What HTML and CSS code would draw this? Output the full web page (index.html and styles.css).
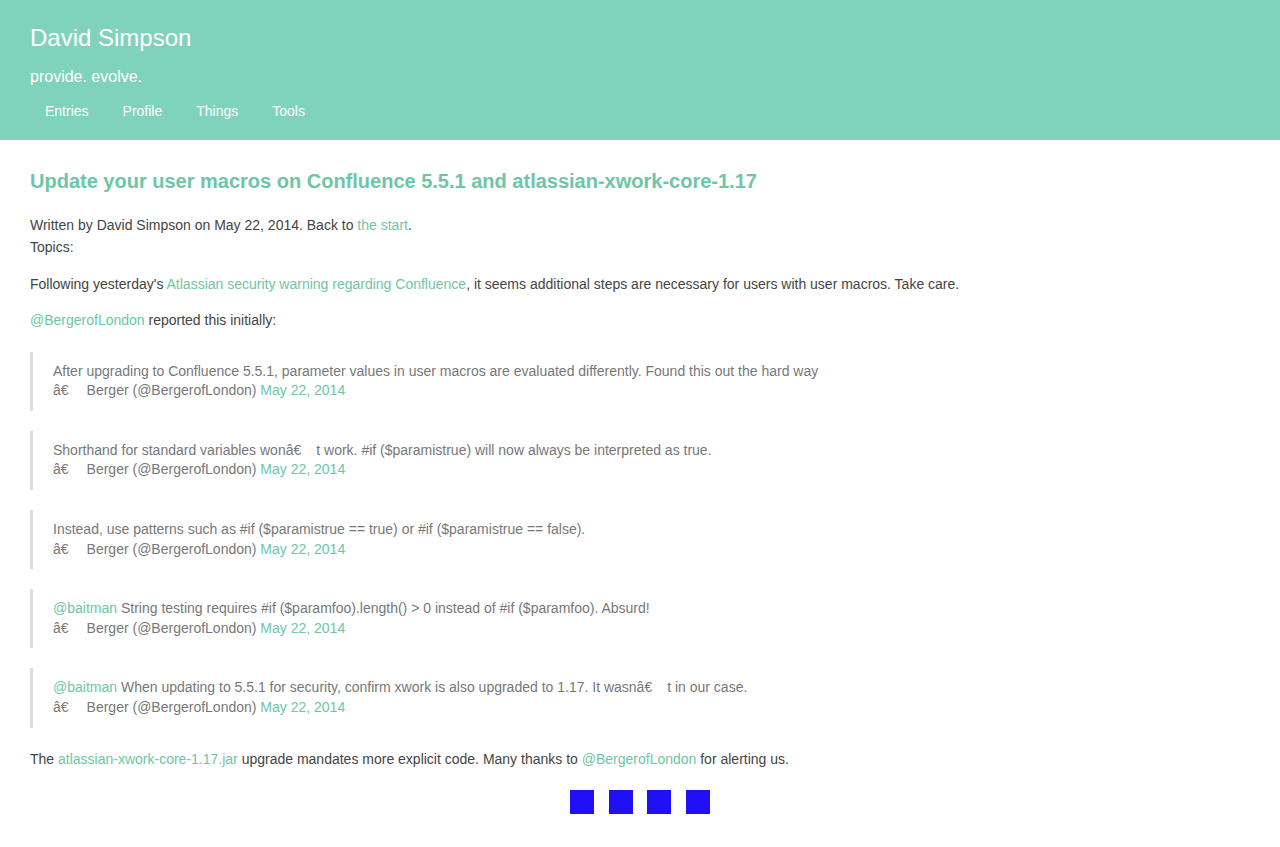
FILE: index.html
```html
<!DOCTYPE html>
<html>
<head>
<meta charset="utf-8">
<title>David Simpson</title>
<link rel="stylesheet" href="styles.css">
</head>
<body>
<header class="site-header">
  <div class="site-title">David Simpson</div>
  <div class="site-tagline">provide. evolve.</div>
  <nav class="site-nav">
    <a href="#">Entries</a>
    <a href="#">Profile</a>
    <a href="#">Things</a>
    <a href="#">Tools</a>
  </nav>
</header>
<main class="content">
  <h2 class="post-title">Update your user macros on Confluence 5.5.1 and atlassian-xwork-core-1.17</h2>
  <p class="meta">Written by David Simpson on May 22, 2014. Back to <a href="#">the start</a>.<br>Topics:</p>
  <p>Following yesterday's <a href="#">Atlassian security warning regarding Confluence</a>, it seems additional steps are necessary for users with user macros. Take care.</p>
  <p><a href="#">@BergerofLondon</a> reported this initially:</p>

  <blockquote class="tweet">
    <p>After upgrading to Confluence 5.5.1, parameter values in user macros are evaluated differently. Found this out the hard way</p>
    <p>â€<span class="gap"></span>Berger (@BergerofLondon) <a href="#">May 22, 2014</a></p>
  </blockquote>

  <blockquote class="tweet">
    <p>Shorthand for standard variables wonâ€<span class="gap gap-sm"></span>t work. #if ($paramistrue) will now always be interpreted as true.</p>
    <p>â€<span class="gap"></span>Berger (@BergerofLondon) <a href="#">May 22, 2014</a></p>
  </blockquote>

  <blockquote class="tweet">
    <p>Instead, use patterns such as #if ($paramistrue == true) or #if ($paramistrue == false).</p>
    <p>â€<span class="gap"></span>Berger (@BergerofLondon) <a href="#">May 22, 2014</a></p>
  </blockquote>

  <blockquote class="tweet">
    <p><a href="#">@baitman</a> String testing requires #if ($paramfoo).length() &gt; 0 instead of #if ($paramfoo). Absurd!</p>
    <p>â€<span class="gap"></span>Berger (@BergerofLondon) <a href="#">May 22, 2014</a></p>
  </blockquote>

  <blockquote class="tweet">
    <p><a href="#">@baitman</a> When updating to 5.5.1 for security, confirm xwork is also upgraded to 1.17. It wasnâ€<span class="gap gap-sm"></span>t in our case.</p>
    <p>â€<span class="gap"></span>Berger (@BergerofLondon) <a href="#">May 22, 2014</a></p>
  </blockquote>

  <p>The <a href="#">atlassian-xwork-core-1.17.jar</a> upgrade mandates more explicit code. Many thanks to <a href="#">@BergerofLondon</a> for alerting us.</p>
</main>
<div class="share">
  <span class="share-box"></span>
  <span class="share-box"></span>
  <span class="share-box"></span>
  <span class="share-box"></span>
</div>
</body>
</html>
```

FILE: styles.css
```css
html, body {
  margin: 0;
  padding: 0;
  background: #ffffff;
}

body {
  font-family: "Liberation Sans", Arial, Helvetica, sans-serif;
  font-size: 14px;
  line-height: 22.4px;
  color: #444444;
}

a {
  color: #6dc6a6;
  text-decoration: none;
}

.site-header {
  background: #7fd3bc;
  height: 140px;
  box-sizing: border-box;
  padding: 22px 30px 0 30px;
  color: #ffffff;
}

.site-title {
  font-size: 24px;
  line-height: 32px;
}

.site-tagline {
  font-size: 16px;
  line-height: 22px;
  margin-top: 12px;
}

.site-nav {
  display: flex;
  gap: 4px;
  margin-top: 14px;
}

.site-nav a {
  color: #ffffff;
  font-size: 14px;
  line-height: 18px;
  padding: 0 15px;
}

.content {
  padding: 0 30px;
}

.post-title {
  font-size: 20px;
  line-height: 26px;
  font-weight: bold;
  color: #6dc6a6;
  margin: 28px 0 20px 0;
}

p {
  margin: 14px 0;
}

.meta {
  margin-top: 0;
}

.tweet {
  margin: 20px 0;
  padding: 10px 20px;
  border-left: 3px solid #dddddd;
  color: #777777;
  line-height: 19.6px;
}

.tweet p {
  margin: 0;
}

.gap {
  display: inline-block;
  width: 18px;
}

.gap-sm {
  width: 15px;
}

.share {
  display: flex;
  justify-content: center;
  gap: 14.5px;
  margin-top: 20px;
  padding-bottom: 34px;
}

.share-box {
  display: block;
  width: 24px;
  height: 24px;
  background: #1f10f5;
}
```
